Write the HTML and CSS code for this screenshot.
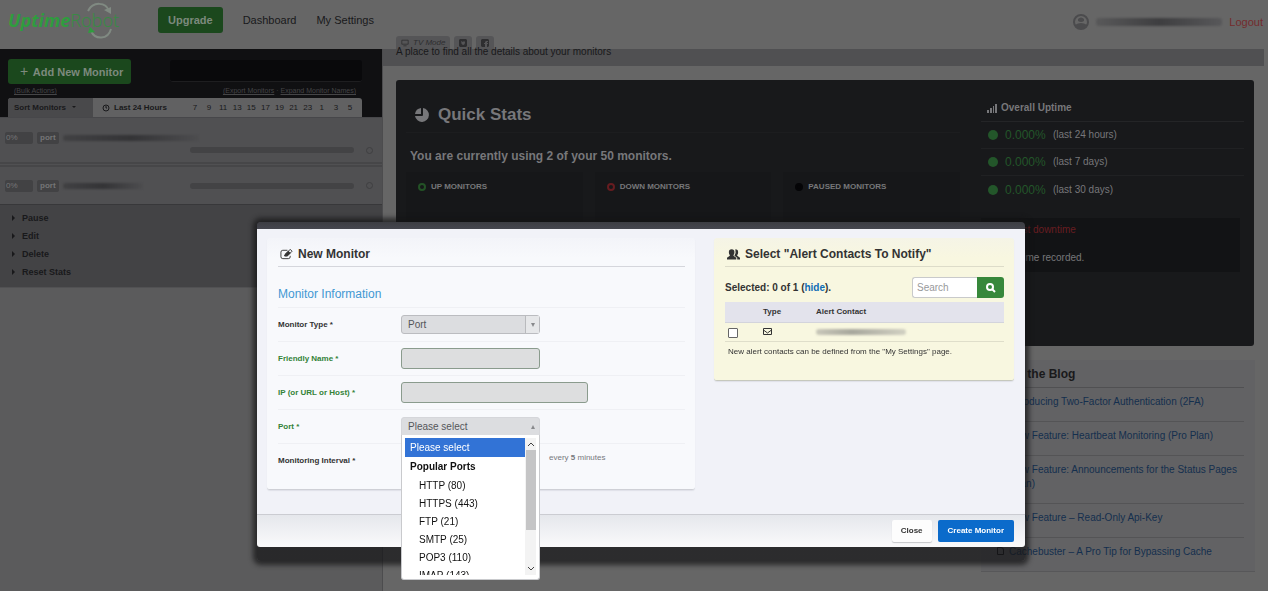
FILE: index.html
```html
<!DOCTYPE html>
<html lang="en">

<head>
    <meta charset="UTF-8">
    <meta name="viewport" content="width=device-width, initial-scale=1.0">
    <title>Uptime Robot</title>
    <link rel="stylesheet" href="styles.css">
</head>

<body>
    <!-- Top bar -->
    <header class="topbar">
        <a class="logo" href="#">
            <svg class="logo-ring" viewBox="0 0 32 38" fill="none" stroke="currentColor" stroke-width="2">
                <path d="M4 9C9 -1 22 0 25 9" />
                <path fill="currentColor" stroke="none" d="M20 8l7-3v7z" />
                <path d="M27 27C24 38 11 38 7 29" />
                <path fill="#2f9c3e" stroke="none" d="M4 31l2-6 5 5z" />
            </svg>
            <b>Uptime</b><span>Robot</span>
        </a>
        <nav class="topnav">
            <a class="btn btn-green" href="#">Upgrade</a>
            <a href="#">Dashboard</a>
            <a href="#">My Settings</a>
        </nav>
        <div class="account">
            <svg class="avatar" viewBox="0 0 16 16" fill="none" stroke="currentColor" stroke-width="2">
                <circle cx="8" cy="8" r="7" />
                <path fill="currentColor" stroke="none" d="M5 5q3-3 6 0v2q-3 2-6 0zM2 11q6-4 12 0l-3 3H5z" />
            </svg>
            <span class="smudge smudge-user"></span>
            <a class="logout" href="#">Logout</a>
        </div>
    </header>

    <div class="page">
        <!-- Monitor list -->
        <aside class="sidebar">
            <div class="sidebar-head">
                <div class="sidebar-tools">
                    <button class="btn btn-green" type="button"><span class="plus">+</span> Add New Monitor</button>
                    <input class="monitor-search" type="search" aria-label="Search monitors">
                </div>
                <div class="sidebar-links">
                    <a href="#">(Bulk Actions)</a>
                    <span><a href="#">(Export Monitors</a> &middot; <a href="#">Expand Monitor Names)</a></span>
                </div>
                <div class="hours">
                    <button class="sort" type="button">Sort Monitors <i class="caret"></i></button>
                    <strong class="last">
                        <svg viewBox="0 0 8 8" fill="none" stroke="currentColor"><circle cx="4" cy="4" r="3" /><path d="M4 2v2h1" /></svg>
                        Last 24 Hours
                    </strong>
                    <div class="ticks">
                        <span>7</span><span>9</span><span>11</span><span>13</span><span>15</span><span>17</span><span>19</span><span>21</span><span>23</span><span>1</span><span>3</span><span>5</span>
                    </div>
                </div>
            </div>
            <div class="monitor monitor-tall">
                <span class="tag tag-percent">0%</span><span class="tag"><b>port</b></span>
                <span class="smudge smudge-name"></span>
                <span class="monitor-bar"></span><span class="ring"></span>
            </div>
            <div class="monitor">
                <span class="tag tag-percent">0%</span><span class="tag"><b>port</b></span>
                <span class="smudge smudge-name smudge-short"></span>
                <span class="monitor-bar"></span><span class="ring"></span>
            </div>
            <ul class="actions">
                <li><a href="#">Pause</a></li>
                <li><a href="#">Edit</a></li>
                <li><a href="#">Delete</a></li>
                <li><a href="#">Reset Stats</a></li>
            </ul>
        </aside>

        <!-- Dashboard -->
        <main class="main">
            <div class="share">
                <a class="chip" href="#">
                    <svg viewBox="0 0 10 9" fill="none" stroke="currentColor"><path d="M1 1h8v5H1zM3 8h4" /></svg>
                    <em>TV Mode</em>
                </a>
                <a class="chip" href="#" aria-label="Twitter">
                    <svg viewBox="0 0 8 8"><path fill="currentColor" d="M1 0h6l1 1v6L7 8H1L0 7V1zM2 2q0 3 2 4q2 0 2-3l-1-1-1 1z" fill-rule="evenodd" /></svg>
                </a>
                <a class="chip" href="#" aria-label="Facebook">
                    <svg viewBox="0 0 8 8"><path fill="currentColor" d="M1 0h6l1 1v6L7 8H6V5h1V4H6V3h1V2H5L4 3v1H3v1h1v3H1L0 7V1z" /></svg>
                </a>
            </div>
            <p class="intro">A place to find all the details about your monitors</p>

            <section class="stats">
                <div class="quick">
                    <h1>
                        <svg viewBox="0 0 16 16" fill="currentColor"><path d="M9 1a7 7 0 1 1-8 8h7q1 0 1-1z" /><path d="M7 1v6H1a7 7 0 0 1 6-6z" /></svg>
                        Quick Stats
                    </h1>
                    <h2>You are currently using 2 of your 50 monitors.</h2>
                    <div class="counts">
                        <div class="count"><i class="dot dot-up"></i>UP MONITORS</div>
                        <div class="count"><i class="dot dot-down"></i>DOWN MONITORS</div>
                        <div class="count"><i class="dot dot-paused"></i>PAUSED MONITORS</div>
                    </div>
                </div>
                <div class="overall">
                    <h3>
                        <svg viewBox="0 0 10 10" fill="currentColor"><path d="M0 7h2v3H0zM3 5h2v5H3zM6 3h1v7H6zM8 1h2v9H8z" /></svg>
                        Overall Uptime
                    </h3>
                    <ul>
                        <li><i class="disc"></i><b>0.000%</b>(last 24 hours)</li>
                        <li><i class="disc"></i><b>0.000%</b>(last 7 days)</li>
                        <li><i class="disc"></i><b>0.000%</b>(last 30 days)</li>
                    </ul>
                    <div class="downtime">
                        <h4>Latest downtime</h4>
                        <p>No downtime recorded.</p>
                    </div>
                </div>
            </section>

            <section class="blog">
                <h2>From the Blog</h2>
                <ul>
                    <li><i class="file"></i><a href="#">Introducing Two-Factor Authentication (2FA)</a></li>
                    <li><i class="file"></i><a href="#">New Feature: Heartbeat Monitoring (Pro Plan)</a></li>
                    <li><i class="file"></i><a href="#">New Feature: Announcements for the Status Pages (Pro Plan)</a></li>
                    <li><i class="file"></i><a href="#">New Feature – Read-Only Api-Key</a></li>
                    <li><i class="file"></i><a href="#">Cachebuster – A Pro Tip for Bypassing Cache</a></li>
                </ul>
            </section>
        </main>
    </div>

    <!-- New monitor dialog -->
    <div class="overlay">
        <form class="modal" role="dialog" aria-labelledby="modalTitle">
            <div class="modal-body">
                <section class="card">
                    <h2 class="card-title" id="modalTitle">
                        <svg viewBox="0 0 14 12" fill="none" stroke="currentColor"><path d="M8 2H3Q1 2 1 4v5q0 2 2 2h6q2 0 2-2V8" /><path d="M5 8l1-2 5-5 2 2-5 5z" /><path fill="currentColor" d="M5 8l1-2 3-3 2 2-3 3z" /></svg>
                        New Monitor
                    </h2>
                    <h3 class="card-sub">Monitor Information</h3>
                    <div class="row">
                        <label for="type">Monitor Type *</label>
                        <div class="pick pick-closed">
                            <select id="type"><option>Port</option></select>
                        </div>
                    </div>
                    <div class="row row-valid">
                        <label for="name">Friendly Name *</label>
                        <input class="field" id="name" type="text">
                    </div>
                    <div class="row row-valid">
                        <label for="host">IP (or URL or Host) *</label>
                        <input class="field field-wide" id="host" type="text">
                    </div>
                    <div class="row row-valid">
                        <label for="port">Port *</label>
                        <div class="pick pick-open">
                            <select id="port"><option>Please select</option></select>
                            <div class="menu">
                                <ul class="menu-list" role="listbox" aria-label="Port">
                                    <li class="selected" role="option" aria-selected="true">Please select</li>
                                    <li class="group">Popular Ports</li>
                                    <li class="item" role="option">HTTP (80)</li>
                                    <li class="item" role="option">HTTPS (443)</li>
                                    <li class="item" role="option">FTP (21)</li>
                                    <li class="item" role="option">SMTP (25)</li>
                                    <li class="item" role="option">POP3 (110)</li>
                                    <li class="item" role="option">IMAP (143)</li>
                                </ul>
                                <div class="scroll">
                                    <svg viewBox="0 0 6 4" fill="none" stroke="currentColor"><path d="M0 4l3-3 3 3" /></svg>
                                    <span class="thumb"></span>
                                    <svg viewBox="0 0 6 4" fill="none" stroke="currentColor"><path d="M0 0l3 3 3-3" /></svg>
                                </div>
                            </div>
                        </div>
                    </div>
                    <div class="row">
                        <span class="label">Monitoring Interval *</span>
                        <span class="interval">every <b>5</b> minutes</span>
                    </div>
                </section>

                <section class="card card-yellow">
                    <h2 class="card-title">
                        <svg viewBox="0 0 14 12" fill="currentColor"><path d="M5 1q3 0 3 3 0 2-1 3v1l3 2v2H0v-2l3-2V7Q2 6 2 4q0-3 3-3z" /><path d="M9 1q3 0 3 3 0 2-1 3v1l3 2v2h-3v-2L8 8q2-3 1-7z" /></svg>
                        Select "Alert Contacts To Notify"
                    </h2>
                    <div class="contacts-head">
                        <strong>Selected: 0 of 1 (<a href="#">hide</a>).</strong>
                        <div class="search">
                            <input type="text" placeholder="Search" aria-label="Search contacts">
                            <button type="button" aria-label="Search">
                                <svg viewBox="0 0 10 10" fill="none" stroke="currentColor" stroke-width="2"><circle cx="4" cy="4" r="3" /><path d="M6 6l3 3" /></svg>
                            </button>
                        </div>
                    </div>
                    <table class="contacts">
                        <thead>
                            <tr><th class="col-check"></th><th class="col-type">Type</th><th>Alert Contact</th></tr>
                        </thead>
                        <tbody>
                            <tr>
                                <td><input type="checkbox" aria-label="Select contact"></td>
                                <td><svg viewBox="0 0 18 14" fill="none" stroke="currentColor" stroke-width="2"><path d="M1 1h16v12H1zM1 4l8 6 8-6" /></svg></td>
                                <td><span class="smudge smudge-contact"></span></td>
                            </tr>
                        </tbody>
                    </table>
                    <p class="note">New alert contacts can be defined from the "My Settings" page.</p>
                </section>
            </div>
            <footer class="modal-foot">
                <button class="btn-close" type="button">Close</button>
                <button class="btn-create" type="submit">Create Monitor</button>
            </footer>
        </form>
    </div>
</body>

</html>
```
FILE: styles.css
```css
* {
    margin: 0;
    padding: 0;
    box-sizing: border-box;
}

body {
    min-height: 100vh;
    display: flex;
    flex-direction: column;
    background: #666;
    color: #19191b;
    font-family: "Liberation Sans", Arial, sans-serif;
    font-size: 10px;
    line-height: 14px;
    overflow: hidden;
}

ul {
    list-style: none;
}

a {
    color: inherit;
    text-decoration: none;
}

button,
input,
select {
    font: inherit;
    color: inherit;
    border: 0;
}

svg {
    flex: none;
}

/* Top bar */
.topbar {
    height: 49px;
    display: flex;
    align-items: flex-start;
    padding: 7px 5px 0 8px;
}

.logo {
    width: 150px;
    height: 28px;
    position: relative;
    color: #2f9c3e;
    font: 19px/26px "Open Sans", sans-serif;
    white-space: nowrap;
}

.logo b {
    font-size: 18px;
    font-style: italic;
}

.logo span {
    color: #3a8a45;
    font-family: "Noto Sans", sans-serif;
    font-size: 18px;
    font-weight: 300;
}

.logo-ring {
    position: absolute;
    left: 76px;
    top: -5px;
    width: 32px;
    height: 38px;
    color: #808a82;
}

.topnav {
    display: flex;
    align-items: center;
    gap: 20px;
    font-size: 11px;
}

.btn {
    display: inline-block;
    padding: 5px 10px;
    border-radius: 3px;
    font-size: 11px;
    font-weight: bold;
    line-height: 16px;
}

.btn-green {
    background: #1b481d;
    color: #7d8a7e;
}

.account {
    margin: 7px 0 0 auto;
    display: flex;
    align-items: center;
    gap: 7px;
    font-size: 11px;
}

.avatar {
    width: 16px;
    height: 16px;
    color: #4b4b4d;
}

.logout {
    color: #742b2d;
}

/* Hidden names */
.smudge {
    display: block;
    height: 6px;
    border-radius: 3px;
    background: linear-gradient(90deg, #59595a, #3e3e40 50%, #58585a);
    filter: blur(1px);
}

.smudge-user {
    width: 126px;
    height: 8px;
}

.page {
    flex: 1;
    display: grid;
    grid-template-columns: 383px 1fr;
}

/* Sidebar */
.sidebar {
    background: #5b5b5c;
    border-right: 1px solid #4c4c4e;
    font-size: 8px;
}

.sidebar-head {
    padding: 10px 20px 0 8px;
    background: #101012;
}

.sidebar-tools {
    display: flex;
    justify-content: space-between;
}

.sidebar-tools .btn {
    padding: 4px 8px 4px 12px;
}

.plus {
    margin-right: 2px;
    font-size: 14px;
    font-weight: normal;
}

.monitor-search {
    width: 192px;
    height: 22px;
    margin-top: 1px;
    background: #09090b;
    border-bottom: 1px solid #1e1e20;
    border-radius: 3px;
}

.sidebar-links {
    display: flex;
    justify-content: space-between;
    padding: 0 6px;
    color: #454547;
    font-size: 7px;
}

.sidebar-links a {
    text-decoration: underline;
}

.hours {
    height: 19px;
    display: flex;
    align-items: center;
    background: #616162;
    border-radius: 3px 3px 0 0;
}

.sort {
    width: 85px;
    height: 19px;
    padding-left: 6px;
    border-radius: 3px 0 0 0;
    background: #49494b;
    font-weight: bold;
    text-align: left;
}

.caret {
    display: inline-block;
    margin: 0 0 2px 4px;
    border: 2px solid transparent;
    border-top-color: #19191b;
    border-bottom: 0;
}

.last {
    display: flex;
    align-items: center;
    gap: 4px;
    padding-left: 9px;
}

.last svg {
    width: 8px;
    height: 8px;
}

.ticks {
    flex: 1;
    display: grid;
    grid-template-columns: repeat(12, 1fr);
    padding: 0 5px 0 21px;
    text-align: center;
}

.monitor {
    height: 37px;
    display: flex;
    align-items: center;
    gap: 4px;
    padding: 0 9px 0 5px;
    background: #505052;
}

.monitor-tall {
    height: 50px;
    flex-wrap: wrap;
    align-content: center;
    gap: 3px 4px;
    padding-top: 5px;
    border-top: 1px solid #47474a;
    border-bottom: 5px double #464648;
}

.tag {
    height: 12px;
    padding: 0 3px;
    border-radius: 2px;
    background: #424244;
    color: #757577;
    line-height: 12px;
}

.tag-percent {
    width: 28px;
    padding: 0 1px;
}

.smudge-name {
    width: 136px;
    background: linear-gradient(90deg, #414143, #343436 50%, #4d4d4f);
}

.smudge-short {
    width: 80px;
}

.monitor-bar {
    width: 164px;
    height: 6px;
    margin-left: auto;
    border-radius: 3px;
    background: #434345;
}

.monitor-tall .monitor-bar {
    margin-left: 185px;
}

.ring {
    width: 7px;
    height: 7px;
    margin-left: 8px;
    border: 1px solid #3f3f41;
    border-radius: 50%;
}

.actions {
    padding: 4px 0 6px 11px;
    background: #434345;
    border-top: 1px solid #38383a;
    border-bottom: 1px solid #515153;
    font-size: 9px;
    font-weight: bold;
    line-height: 18px;
}

.actions li {
    display: flex;
    align-items: center;
    gap: 7px;
}

.actions li::before {
    content: "";
    border: 3px solid transparent;
    border-left-color: #19191b;
    border-right: 0;
    margin-left: 1px;
}

/* Dashboard */
.share {
    display: flex;
    gap: 4px;
    height: 13px;
    margin: -13px 0 0 13px;
}

.chip {
    display: flex;
    align-items: center;
    gap: 4px;
    padding: 0 5px;
    border-radius: 3px 3px 0 0;
    background: #555557;
    color: #2e2e30;
    font-size: 8px;
}

.chip svg {
    width: 8px;
    height: 8px;
}

.intro {
    height: 17px;
    margin-right: 4px;
    padding-left: 13px;
    background: #505052;
    line-height: 6px;
}

.stats {
    min-height: 266px;
    margin: 14px 14px 0 13px;
    padding: 18px 10px 0;
    display: grid;
    grid-template-columns: 1fr 263px;
    gap: 21px;
    background: #18191b;
    border-radius: 3px;
    color: #77777a;
}

.quick h1 {
    display: flex;
    align-items: center;
    gap: 8px;
    padding: 7px 0 7px 8px;
    border-bottom: 1px solid #1c1d1f;
    font-size: 17px;
    line-height: 20px;
}

.quick h1 svg {
    width: 16px;
    height: 16px;
}

.quick h2 {
    padding: 15px 4px 8px;
    font-size: 12px;
    line-height: 16px;
}

.counts {
    display: grid;
    grid-template-columns: repeat(3, 1fr);
    gap: 12px;
}

.count {
    height: 120px;
    padding: 8px 12px;
    background: #161719;
    font-size: 8px;
    font-weight: bold;
}

.dot {
    display: inline-block;
    width: 8px;
    height: 8px;
    margin-right: 5px;
    border: 2px solid;
    border-radius: 50%;
    vertical-align: middle;
}

.dot-up {
    border-color: #235226;
}

.dot-down {
    border-color: #661c20;
}

.dot-paused {
    border-color: #050507;
    background: #050507;
}

.overall h3 {
    display: flex;
    align-items: center;
    gap: 4px;
    padding: 3px 6px 6px;
    border-bottom: 1px solid #242527;
    font-size: 10px;
}

.overall h3 svg {
    width: 10px;
    height: 10px;
}

.overall li {
    height: 27px;
    display: flex;
    align-items: center;
    padding-left: 7px;
    border-bottom: 1px solid #202123;
}

.overall li:last-child {
    border-bottom: 0;
}

.overall li b {
    width: 48px;
    color: #23562a;
    font-size: 12px;
    font-weight: normal;
}

.disc {
    width: 10px;
    height: 10px;
    margin-right: 7px;
    border-radius: 50%;
    background: #23562a;
}

.downtime {
    height: 54px;
    margin-top: 15px;
    margin-right: 4px;
    padding: 5px 0;
    background: #121315;
}

.downtime h4 {
    padding: 0 22px 14px;
    color: #681d21;
    font-size: 10px;
    font-weight: normal;
}

.blog {
    width: 274px;
    margin: 14px 13px 0 auto;
    padding: 7px 11px 0 9px;
    background: #626264;
    border-bottom: 1px solid #575759;
}

.blog h2 {
    padding: 0 4px 6px;
    border-bottom: 1px solid #505052;
    font-size: 12px;
    line-height: 14px;
}

.blog li {
    padding: 7px 0 12px;
    border-bottom: 1px solid #545456;
    color: #142f4e;
}

.blog li:last-child {
    border-bottom: 0;
}

.file {
    display: inline-block;
    width: 7px;
    height: 8px;
    margin: 0 5px 0 7px;
    border: 1px solid #19191b;
    border-top-right-radius: 3px;
}

/* Dialog */
.overlay {
    position: fixed;
    inset: 0;
    padding: 222px 243px 0 257px;
}

.modal {
    padding: 7px 0 14px;
    border-radius: 4px;
    background: linear-gradient(#3c3d43, #45464e 7px, rgba(20, 20, 22, 0.7) 8px);
    box-shadow: 0 0 5px 4px rgba(20, 20, 22, 0.7);
    color: #333;
}

.modal-body {
    display: grid;
    grid-template-columns: 428fr 300fr;
    align-items: start;
    gap: 19px;
    padding: 9px 11px 24px 10px;
    background: #f1f2f8;
}

.card {
    padding: 8px 10px 12px 11px;
    background: linear-gradient(#f3f4f9, #f8f9fc 20px);
    border-bottom: 1px solid #cfd0d6;
    border-radius: 3px;
    box-shadow: 0 1px 1px #dfe0e8;
}

.card-title {
    display: flex;
    align-items: center;
    gap: 5px;
    padding: 0 2px 4px;
    border-bottom: 1px solid #d5d6dc;
    font-size: 12px;
    line-height: 16px;
}

.card-title svg {
    width: 13px;
    height: 12px;
}

.card-sub {
    padding: 19px 0 5px;
    color: #4398d3;
    font-size: 12px;
    font-weight: normal;
    line-height: 16px;
}

.row {
    height: 34px;
    display: grid;
    grid-template-columns: 123px 1fr;
    align-items: center;
    border-top: 1px solid #eff0f4;
    font-size: 8px;
}

.row label,
.row .label {
    font-weight: bold;
}

.row-valid label {
    color: #338238;
}

.field {
    width: 139px;
    height: 21px;
    padding: 0 6px;
    border: 1px solid #8a9b8d;
    border-radius: 3px;
    background: #dddedf;
}

.field-wide {
    width: 187px;
}

.pick {
    width: 139px;
    position: relative;
}

.pick select {
    width: 100%;
    height: 19px;
    display: block;
    appearance: none;
    padding: 0 6px;
    border: 1px solid #bbbcc0;
    border-radius: 3px;
    background: #dcdde0;
    color: #55565a;
    font-size: 10px;
}

.pick::after {
    content: "";
    position: absolute;
    right: 5px;
    top: 8px;
    border: 2px solid transparent;
    border-top: 4px solid #88898c;
    border-bottom: 0;
}

.pick-closed::before {
    content: "";
    position: absolute;
    right: 1px;
    top: 1px;
    width: 13px;
    height: 17px;
    border-left: 1px solid #b9babd;
    background: #e6e7e9;
}

.pick-open select {
    border-color: #d5d6da;
    border-radius: 3px 3px 0 0;
}

.pick-open::after {
    border-top: 0;
    border-bottom: 4px solid #88898c;
}

.menu {
    position: absolute;
    z-index: 2;
    top: 18px;
    left: 0;
    width: 100%;
    height: 145px;
    display: flex;
    padding: 3px 3px 4px;
    border: 1px solid #c9cacd;
    border-top: 0;
    border-radius: 0 0 3px 3px;
    background: #fff;
    color: #111;
    font-size: 10px;
}

.menu-list {
    flex: 1;
    overflow: hidden;
}

.menu-list li {
    height: 19px;
    padding-left: 5px;
    line-height: 19px;
}

.menu-list .selected {
    background: #3273d6;
    color: #fff;
}

.menu-list .group {
    font-weight: bold;
}

.menu-list .item {
    height: 18px;
    padding-left: 14px;
}

.scroll {
    width: 11px;
    display: flex;
    flex-direction: column;
    align-items: center;
    justify-content: space-between;
    padding: 4px 0;
    background: #f3f3f3;
    color: #444;
}

.scroll svg {
    width: 6px;
    height: 4px;
}

.thumb {
    width: 10px;
    height: 80px;
    margin: 4px 0 auto;
    background: #c5c5c6;
}

.interval {
    padding: 0 0 6px 148px;
    color: #77787c;
}

.card-yellow {
    padding-bottom: 18px;
    background: linear-gradient(#f5f4e6, #f8f7e0 20px);
    border-color: #c6c8bd;
}

.card-yellow .card-title {
    border-color: #dddcc9;
}

.contacts-head {
    display: flex;
    align-items: center;
    justify-content: space-between;
    padding: 10px 0 4px;
}

.contacts-head a {
    color: #0f6db5;
}

.search {
    display: flex;
    height: 21px;
}

.search input {
    width: 65px;
    padding-left: 4px;
    border: 1px solid #c9cacb;
    border-right: 0;
    border-radius: 3px 0 0 3px;
    background: #fff;
}

.search input::placeholder {
    color: #98999b;
}

.search button {
    width: 27px;
    border-radius: 0 3px 3px 0;
    background: #37883b;
    color: #fff;
}

.search svg {
    width: 10px;
    height: 10px;
    vertical-align: middle;
}

.contacts {
    width: 100%;
    border-collapse: collapse;
    font-size: 8px;
    text-align: left;
}

.contacts th {
    height: 20px;
    background: #e3e3ec;
    border-bottom: 1px solid #d3d4dc;
}

.contacts td {
    height: 19px;
    border-bottom: 1px solid #dfdeca;
}

.col-check {
    width: 38px;
}

.col-type {
    width: 53px;
}

.contacts input {
    display: block;
    width: 10px;
    height: 10px;
    margin: 3px 0 0 3px;
    appearance: none;
    border: 1px solid #666;
    border-radius: 1px;
    background: #fff;
}

.contacts svg {
    display: block;
    width: 9px;
    height: 7px;
}

.smudge-contact {
    width: 90px;
    background: linear-gradient(90deg, #c9c8ba, #a8a89d 40%, #d2d1c3);
}

.note {
    padding: 3px;
    font-size: 8px;
}

.modal-foot {
    height: 33px;
    display: flex;
    align-items: center;
    justify-content: flex-end;
    gap: 6px;
    padding: 0 11px;
    border-top: 1px solid #cbccd2;
    border-radius: 0 0 3px 3px;
    background: linear-gradient(#e5e7ec, #fafafb);
}

.modal-foot button {
    height: 22px;
    border-radius: 2px;
    font-size: 8px;
    font-weight: bold;
}

.btn-close {
    padding: 0 9px;
    background: #fdfdfd;
    box-shadow: 0 1px 1px #c5c6c9;
}

.btn-create {
    padding: 0 10px;
    background: #0b6bcb;
    color: #fff;
}
```
